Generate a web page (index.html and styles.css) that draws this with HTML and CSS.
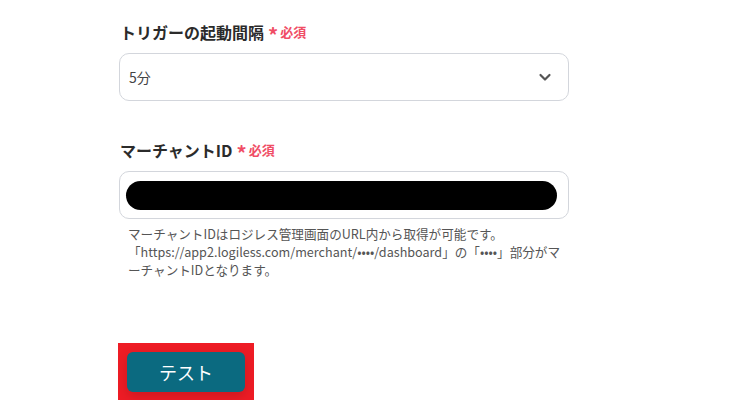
FILE: index.html
```html
<!DOCTYPE html>
<html lang="ja">
<head>
    <meta charset="UTF-8">
    <title>Document</title>
    <link rel="stylesheet" href="styles.css">
</head>
<body>
    <div class="form-box">
        <div class="form-item">
            <div class="label">トリガーの起動間隔<span class="req"><span class="star">*</span>必須</span></div>
            <div class="select">
                <span>5分</span>
                <svg class="chev" width="14" height="14" viewBox="0 0 14 14"><path d="M2.5 5l4.5 4.5L11.5 5" fill="none" stroke="#555" stroke-width="2.2" stroke-linecap="round" stroke-linejoin="round"/></svg>
            </div>
        </div>
        <div class="form-item">
            <div class="label">マーチャントID<span class="req"><span class="star">*</span>必須</span></div>
            <div class="input">
                <div class="mask"></div>
            </div>
            <div class="help">マーチャントIDはロジレス管理画面のURL内から取得が可能です。<br>「https://app2.logiless.com/merchant/••••/dashboard」の「••••」部分がマーチャントIDとなります。</div>
        </div>
        <div class="btn-wrap">
            <button class="test-btn">テスト</button>
        </div>
    </div>
</body>
</html>
```

FILE: styles.css
```css
* {
    margin: 0;
    padding: 0;
    box-sizing: border-box;
}

body {
    background: #fff;
    font-family: "Noto Sans CJK JP", "Noto Sans", sans-serif;
    color: #2b2b2b;
}

.form-box {
    width: 450px;
    margin-left: 119px;
    padding-top: 18px;
}

.form-item {
    margin-bottom: 35px;
}

.label {
    font-size: 16px;
    font-weight: bold;
    line-height: 24px;
    padding-left: 1px;
    margin-bottom: 8px;
    display: flex;
    align-items: center;
}

.req {
    color: #f04d65;
    font-size: 13px;
    margin-left: 4px;
    display: flex;
    align-items: center;
}

.star {
    font-size: 20px;
    line-height: 1;
    margin-top: 7px;
    margin-right: 2px;
}

.select {
    height: 48px;
    border: 1px solid #d3d6dc;
    border-radius: 10px;
    display: flex;
    align-items: center;
    justify-content: space-between;
    padding: 0 16px 0 9px;
    font-size: 14px;
    color: #444;
}

.input {
    height: 48px;
    border: 1px solid #d3d6dc;
    border-radius: 10px;
    padding: 0 11px 0 6px;
    display: flex;
    align-items: center;
}

.mask {
    height: 29px;
    width: 100%;
    background: #000;
    border-radius: 15px;
}

.help {
    font-size: 12.6px;
    line-height: 18px;
    color: #555;
    padding: 6px 0 0 9px;
    width: 449px;
    word-break: break-all;
    line-break: anywhere;
}

.btn-wrap {
    margin-top: 64px;
    margin-left: -1px;
    width: 136px;
    height: 57px;
    background: #ee1c25;
    padding: 9px;
}

.test-btn {
    width: 118px;
    height: 40px;
    border: none;
    border-radius: 6px;
    background: #0b6a80;
    color: #fff;
    font-family: "Noto Sans CJK JP", sans-serif;
    font-size: 18px;
    box-shadow: 0 4px 12px rgba(0, 0, 0, 0.15);
}
```
